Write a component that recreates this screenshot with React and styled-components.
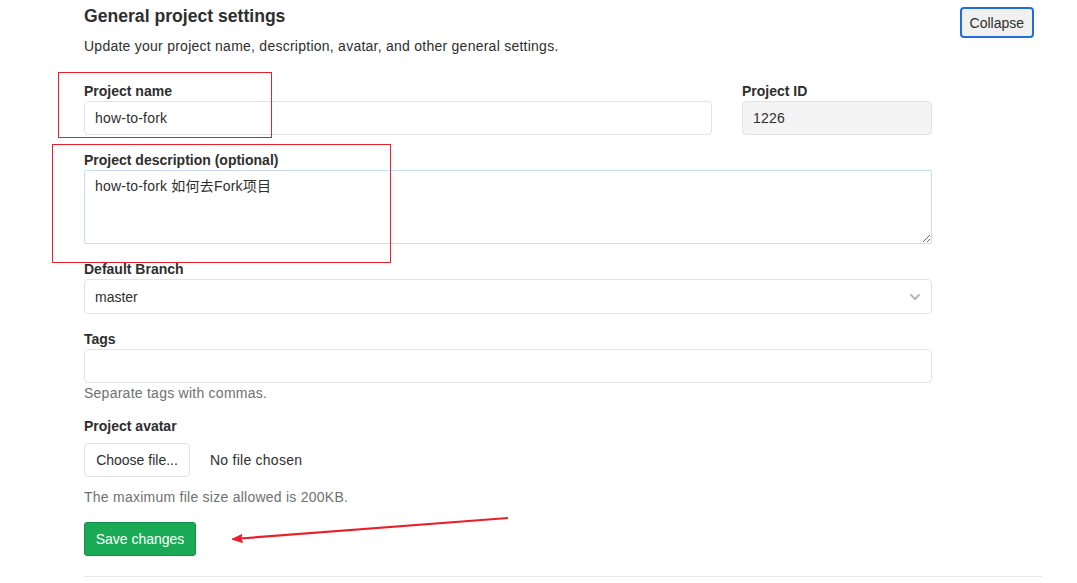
import React, { useState } from 'react';
import styled, { createGlobalStyle } from 'styled-components';

const GlobalStyle = createGlobalStyle`
  body {
    margin: 0;
    background: #fff;
    font-family: "Liberation Sans", "Noto Sans CJK SC", sans-serif;
    color: #2e2e2e;
  }
`;

const Page = styled.div`
  position: relative;
  width: 1077px;
  height: 583px;
  overflow: hidden;
  padding-left: 84px;
  box-sizing: border-box;
`;

const Section = styled.section`
  width: 958px;
  padding-top: 4px;
  padding-bottom: 20px;
  border-bottom: 1px solid #e8e8e8;
`;

const Header = styled.div`
  display: flex;
  justify-content: space-between;
  align-items: flex-start;
  height: 24px;
  padding-right: 8px;
`;

const Title = styled.h4`
  margin: 0;
  font-size: 17.6px;
  line-height: 24px;
  font-weight: 600;
  color: #2e2e2e;
`;

const CollapseButton = styled.button`
  margin-top: 3px;
  height: 31px;
  padding: 0 8px;
  font-family: inherit;
  font-size: 14px;
  color: #2e2e2e;
  background: #f0f0f0;
  border: 2px solid #1f6fd6;
  border-radius: 4px;
`;

const Subtitle = styled.p`
  margin: 8px 0 25px;
  font-size: 14px;
  line-height: 20px;
  letter-spacing: 0.25px;
  color: #2e2e2e;
`;

const Form = styled.form`
  width: 848px;
`;

const Row = styled.div`
  display: flex;
  gap: 30px;
`;

const Group = styled.div`
  flex: ${p => (p.$width ? `0 0 ${p.$width}px` : '1')};
  margin-bottom: ${p => p.$mb ?? 15}px;
`;

const Label = styled.label`
  display: block;
  font-size: 14px;
  line-height: 20px;
  font-weight: 700;
  color: #2e2e2e;
`;

const Input = styled.input`
  display: block;
  width: 100%;
  box-sizing: border-box;
  height: 34px;
  padding: 0 10px;
  font-family: inherit;
  font-size: 14px;
  letter-spacing: 0.2px;
  color: #2e2e2e;
  background: ${p => (p.readOnly ? '#f4f4f4' : '#fff')};
  border: 1px solid #e3e3e3;
  border-radius: 4px;
  outline: none;
`;

const TextArea = styled.textarea`
  display: block;
  width: 100%;
  box-sizing: border-box;
  height: 74px;
  padding: 5px 10px;
  font-family: "Liberation Sans", "Noto Sans CJK SC", sans-serif;
  font-size: 14px;
  line-height: 20px;
  letter-spacing: 0.2px;
  color: #2e2e2e;
  border: 1px solid #c5dcf2;
  border-radius: 2px;
  outline: none;
`;

const SelectBox = styled.div`
  display: flex;
  align-items: center;
  justify-content: space-between;
  height: 35px;
  box-sizing: border-box;
  padding: 0 10px;
  font-size: 14px;
  color: #2e2e2e;
  border: 1px solid #e3e3e3;
  border-radius: 4px;
`;

const Help = styled.div`
  font-size: 14px;
  line-height: 20px;
  letter-spacing: 0.25px;
  color: #707070;
  margin-top: ${p => p.$mt ?? 0}px;
`;

const FileRow = styled.div`
  display: flex;
  align-items: center;
  gap: 20px;
  margin-top: 7px;
`;

const FileButton = styled.button`
  height: 34px;
  width: 106px;
  font-family: inherit;
  font-size: 14px;
  color: #2e2e2e;
  background: #fff;
  border: 1px solid #e3e3e3;
  border-radius: 4px;
`;

const FileName = styled.span`
  font-size: 14px;
  letter-spacing: 0.25px;
  color: #2e2e2e;
`;

const SaveButton = styled.button`
  margin-top: 15px;
  height: 34px;
  width: 112px;
  font-family: inherit;
  font-size: 14px;
  color: #fff;
  background: #1aaa55;
  border: 1px solid #168f48;
  border-radius: 3px;
`;

const Marker = styled.div`
  position: absolute;
  border: 1px solid #e8202a;
  pointer-events: none;
`;

const Arrow = styled.svg`
  position: absolute;
  left: 0;
  top: 0;
  pointer-events: none;
`;

function App() {
  const [name, setName] = useState('how-to-fork');
  const [desc, setDesc] = useState('how-to-fork 如何去Fork项目');
  const [tags, setTags] = useState('');

  return (
    <Page>
      <GlobalStyle />
      <Section>
        <Header>
          <Title>General project settings</Title>
          <CollapseButton type="button">Collapse</CollapseButton>
        </Header>
        <Subtitle>Update your project name, description, avatar, and other general settings.</Subtitle>

        <Form onSubmit={e => e.preventDefault()}>
          <Row>
            <Group>
              <Label>Project name</Label>
              <Input value={name} onChange={e => setName(e.target.value)} />
            </Group>
            <Group $width={190}>
              <Label>Project ID</Label>
              <Input value="1226" readOnly />
            </Group>
          </Row>

          <Group>
            <Label>Project description (optional)</Label>
            <TextArea value={desc} onChange={e => setDesc(e.target.value)} />
          </Group>

          <Group>
            <Label>Default Branch</Label>
            <SelectBox>
              <span>master</span>
              <svg width="12" height="8" viewBox="0 0 12 8">
                <path d="M1.5 1.5 L6 6 L10.5 1.5" fill="none" stroke="#b5b5b5" strokeWidth="2" />
              </svg>
            </SelectBox>
          </Group>

          <Group $mb={13}>
            <Label>Tags</Label>
            <Input value={tags} onChange={e => setTags(e.target.value)} />
            <Help>Separate tags with commas.</Help>
          </Group>

          <Group $mb={0}>
            <Label>Project avatar</Label>
            <FileRow>
              <FileButton type="button">Choose file...</FileButton>
              <FileName>No file chosen</FileName>
            </FileRow>
            <Help $mt={10}>The maximum file size allowed is 200KB.</Help>
          </Group>

          <SaveButton type="submit">Save changes</SaveButton>
        </Form>
      </Section>

      {/* red annotation overlay */}
      <Marker style={{ left: 58, top: 72, width: 212, height: 64 }} />
      <Marker style={{ left: 52, top: 144, width: 337, height: 117 }} />
      <Arrow width="1077" height="583">
        <line x1="508" y1="518" x2="240" y2="538.5" stroke="#e8202a" strokeWidth="2.2" />
        <path d="M232 539.2 L242 534.6 L240.5 538.6 L242.6 542.5 Z" fill="#e8202a" stroke="#e8202a" strokeWidth="1" />
      </Arrow>
    </Page>
  );
}

export default App;
